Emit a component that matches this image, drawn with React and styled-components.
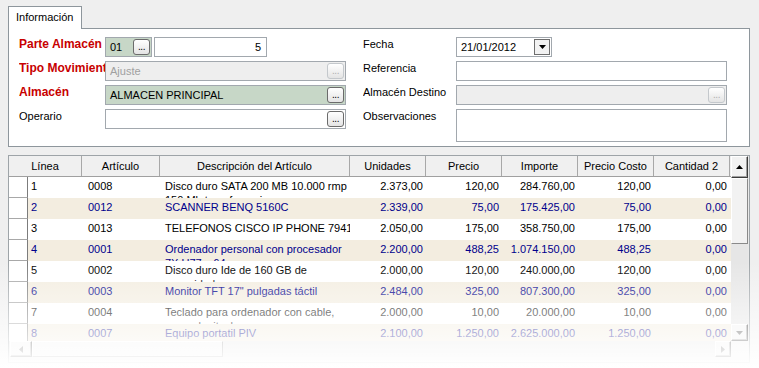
import React from "react";
import styled, { createGlobalStyle, css } from "styled-components";

const GlobalStyle = createGlobalStyle`
  html, body {
    margin: 0;
    padding: 0;
    background: #efefef;
    font-family: "Liberation Sans", Arial, sans-serif;
    font-size: 11px;
    color: #000;
  }
  body {
    height: 368px;
    overflow: hidden;
  }
`;

const Page = styled.div`
  position: relative;
  height: 368px;
  padding-top: 6px;
  box-sizing: border-box;
`;

const Tab = styled.div`
  position: relative;
  z-index: 1;
  margin-left: 8px;
  margin-bottom: -1px;
  width: 74px;
  height: 23px;
  box-sizing: border-box;
  border: 1px solid #8e969c;
  border-bottom: none;
  background: #fff;
  font-size: 11px;
  padding: 4px 0 0 7px;
`;

const Panel = styled.div`
  margin: 0 9px 0 8px;
  border: 1px solid #8e969c;
  background: #fff;
  padding: 8px 0 4px 10px;
  display: grid;
  grid-template-columns: 86px 241px 17px 93px 271px;
  grid-template-rows: 20px 20px 20px 33px;
  row-gap: 4px;
`;

const Label = styled.div`
  line-height: 15px;
  white-space: nowrap;
  overflow: hidden;
  grid-column: ${(p) => p.$col};
  ${(p) =>
    p.$required &&
    css`
      color: #c80000;
      font-weight: bold;
      font-size: 12px;
    `}
`;

const bgs = {
  green: "#c7d7c7",
  off: "#eeeeee",
  white: "#fff",
};

const Field = styled.div`
  grid-column: ${(p) => p.$col};
  display: flex;
  align-items: center;
  box-sizing: border-box;
  height: ${(p) => (p.$tall ? "33px" : "20px")};
  width: ${(p) => (p.$w ? `${p.$w}px` : "auto")};
  border: 1px solid #a2a8ae;
  background: ${(p) => bgs[p.$bg || "white"]};
  color: ${(p) => (p.$bg === "off" ? "#a0a0a0" : "#000")};
  padding: 0 1px 0 4px;
  justify-content: ${(p) => (p.$right ? "flex-end" : "space-between")};
`;

const Pair = styled.div`
  grid-column: ${(p) => p.$col};
  display: flex;
  gap: 2px;
`;

const Value = styled.span`
  padding-right: ${(p) => (p.$right ? "4px" : "0")};
`;

const DotsButton = styled.div`
  width: 17px;
  height: 16px;
  box-sizing: border-box;
  border: 1px solid ${(p) => (p.$off ? "#c4c8cc" : "#6b6b6b")};
  border-radius: 3px;
  background: linear-gradient(#ffffff, #e4e4e4);
  color: ${(p) => (p.$off ? "#b0b0b0" : "#000")};
  font-size: 10px;
  line-height: 14px;
  text-align: center;
  letter-spacing: -0.5px;
`;

const DropButton = styled.div`
  width: 16px;
  height: 16px;
  box-sizing: border-box;
  border: 1px solid #6e6e6e;
  background: #f2f2f2;
  display: flex;
  align-items: center;
  justify-content: center;
`;

const Arrow = ({ dir = "down", color = "#000" }) => {
  const pts = {
    down: "0,0 7,0 3.5,4",
    up: "0,4 7,4 3.5,0",
    left: "4,0 4,7 0,3.5",
    right: "0,0 0,7 4,3.5",
  }[dir];
  const vert = dir === "up" || dir === "down";
  return (
    <svg width={vert ? 7 : 4} height={vert ? 4 : 7}>
      <polygon points={pts} fill={color} />
    </svg>
  );
};

const Grid = styled.div`
  margin: 8px 9px 0 8px;
  border: 1px solid #9ea4a8;
  background: #e9e9e9;
  height: 208px;
  box-sizing: border-box;
  display: flex;
  flex-direction: column;
`;

const Top = styled.div`
  display: flex;
  height: 185px;
`;

const Main = styled.div`
  width: 722px;
  display: flex;
  flex-direction: column;
  overflow: hidden;
`;

const HeaderRow = styled.div`
  display: flex;
  height: 20px;
  flex: none;
  background: #f0f0f0;
  border-bottom: 1px solid #a0a0a0;
`;

const HeadCell = styled.div`
  width: ${(p) => p.$w}px;
  flex: none;
  box-sizing: border-box;
  border-right: 1px solid #a8a8a8;
  text-align: center;
  line-height: 20px;
  white-space: nowrap;
`;

const Body = styled.div`
  flex: 1;
  overflow: hidden;
  background: #fff;
`;

const Row = styled.div`
  display: flex;
  height: 21px;
  color: ${(p) => (p.$alt ? "#00008c" : "#000")};
`;

const Indicator = styled.div`
  width: 19px;
  flex: none;
  box-sizing: border-box;
  background: #fff;
  border-right: 1px solid #7c7c7c;
  border-bottom: 1px solid #a8a8a8;
`;

const Cells = styled.div`
  display: flex;
  flex: 1;
  background: ${(p) => (p.$alt ? "#f3ede0" : "#fff")};
`;

const Cell = styled.div`
  width: ${(p) => p.$w}px;
  flex: none;
  box-sizing: border-box;
  overflow: hidden;
  white-space: pre;
  line-height: 14px;
  padding-top: 2px;
  text-align: ${(p) => (p.$num ? "right" : "left")};
  padding-left: ${(p) => p.$pl || 0}px;
  padding-right: ${(p) => (p.$num ? 3 : 0)}px;
`;

const VScroll = styled.div`
  width: 17px;
  display: flex;
  flex-direction: column;
  background: #e6e6e6;
`;

const bevel = css`
  box-sizing: border-box;
  border: 1px solid;
  border-color: #ffffff #3c3c3c #3c3c3c #ffffff;
  box-shadow: inset -1px -1px 0 #a0a0a0;
  background: #f2f2f2;
  display: flex;
  align-items: center;
  justify-content: center;
`;

const ScrollBtn = styled.div`
  ${bevel}
  width: ${(p) => p.$w || 17}px;
  height: ${(p) => p.$h || 17}px;
  flex: none;
`;

const Thumb = styled.div`
  ${bevel}
  flex: none;
  width: ${(p) => p.$w || 17}px;
  height: ${(p) => p.$h || 17}px;
  border-color: #ffffff #8a8a8a #8a8a8a #ffffff;
  box-shadow: none;
`;

const Spacer = styled.div`
  flex: 1;
`;

const HScroll = styled.div`
  display: flex;
  height: 16px;
  padding-left: 1px;
  background: #e6e6e6;
`;

const Corner = styled.div`
  width: 18px;
  background: #efefef;
`;

const Fade = styled.div`
  position: absolute;
  left: 0;
  right: 0;
  top: 262px;
  bottom: 0;
  pointer-events: none;
  background: linear-gradient(
    rgba(255, 255, 255, 0) 0px,
    rgba(255, 255, 255, 0.9) 95px,
    #ffffff 106px
  );
`;

const columns = [
  { key: "linea", w: 54, pl: 3 },
  { key: "art", w: 78, pl: 6 },
  { key: "desc", w: 190, pl: 5 },
  { key: "uds", w: 76, num: true },
  { key: "precio", w: 76, num: true },
  { key: "importe", w: 76, num: true },
  { key: "costo", w: 76, num: true },
  { key: "cant", w: 76, num: true },
];

const headers = [
  ["Línea", 73],
  ["Artículo", 78],
  ["Descripción del Artículo", 190],
  ["Unidades", 76],
  ["Precio", 76],
  ["Importe", 76],
  ["Precio Costo", 76],
  ["Cantidad 2", 76],
];

const rows = [
  ["1", "0008", "Disco duro SATA 200 MB 10.000 rmp\n150 Mb transferencia", "2.373,00", "120,00", "284.760,00", "120,00", "0,00"],
  ["2", "0012", "SCANNER BENQ 5160C", "2.339,00", "75,00", "175.425,00", "75,00", "0,00"],
  ["3", "0013", "TELEFONOS CISCO IP PHONE 7941", "2.050,00", "175,00", "358.750,00", "175,00", "0,00"],
  ["4", "0001", "Ordenador personal con procesador\n7X U77 x 64", "2.200,00", "488,25", "1.074.150,00", "488,25", "0,00"],
  ["5", "0002", "Disco duro Ide de 160 GB de\ncapacidad", "2.000,00", "120,00", "240.000,00", "120,00", "0,00"],
  ["6", "0003", "Monitor TFT 17\" pulgadas táctil", "2.484,00", "325,00", "807.300,00", "325,00", "0,00"],
  ["7", "0004", "Teclado para ordenador con cable,\nmarca logitech", "2.000,00", "10,00", "20.000,00", "10,00", "0,00"],
  ["8", "0007", "Equipo portatil PIV", "2.100,00", "1.250,00", "2.625.000,00", "1.250,00", "0,00"],
];

export default function App() {
  return (
    <Page>
      <GlobalStyle />
      <Tab>Información</Tab>
      <Panel>
        <Label $col={1} $required>Parte Almacén</Label>
        <Pair $col={2}>
          <Field $bg="green" $w={47}>
            <span>01</span>
            <DotsButton>...</DotsButton>
          </Field>
          <Field $w={113} $right>
            <Value $right>5</Value>
          </Field>
        </Pair>
        <Label $col={4}>Fecha</Label>
        <Field $col={5} $w={96}>
          <span>21/01/2012</span>
          <DropButton>
            <Arrow />
          </DropButton>
        </Field>

        <Label $col={1} $required>Tipo Movimiento</Label>
        <Field $col={2} $bg="off">
          <span>Ajuste</span>
          <DotsButton $off>...</DotsButton>
        </Field>
        <Label $col={4}>Referencia</Label>
        <Field $col={5} />

        <Label $col={1} $required>Almacén</Label>
        <Field $col={2} $bg="green">
          <span>ALMACEN PRINCIPAL</span>
          <DotsButton>...</DotsButton>
        </Field>
        <Label $col={4}>Almacén Destino</Label>
        <Field $col={5} $bg="off">
          <span />
          <DotsButton $off>...</DotsButton>
        </Field>

        <Label $col={1}>Operario</Label>
        <Field $col={2}>
          <span />
          <DotsButton>...</DotsButton>
        </Field>
        <Label $col={4}>Observaciones</Label>
        <Field $col={5} $tall />
      </Panel>

      <Grid>
        <Top>
          <Main>
            <HeaderRow>
              {headers.map(([t, w]) => (
                <HeadCell key={t} $w={w}>
                  {t}
                </HeadCell>
              ))}
            </HeaderRow>
            <Body>
              {rows.map((r, i) => (
                <Row key={r[0]} $alt={i % 2 === 1}>
                  <Indicator />
                  <Cells $alt={i % 2 === 1}>
                    {columns.map((c, j) => (
                      <Cell key={c.key} $w={c.w} $pl={c.pl} $num={c.num}>
                        {r[j]}
                      </Cell>
                    ))}
                  </Cells>
                </Row>
              ))}
            </Body>
          </Main>
          <VScroll>
            <ScrollBtn $h={22}>
              <Arrow dir="up" />
            </ScrollBtn>
            <Thumb $h={66} />
            <Spacer />
            <ScrollBtn $h={17}>
              <Arrow dir="down" color="#555" />
            </ScrollBtn>
          </VScroll>
        </Top>
        <HScroll>
          <ScrollBtn $w={22} $h={16}>
            <Arrow dir="left" color="#555" />
          </ScrollBtn>
          <Thumb $w={191} $h={16} />
          <Spacer />
          <ScrollBtn $w={16} $h={16}>
            <Arrow dir="right" color="#555" />
          </ScrollBtn>
          <Corner />
        </HScroll>
      </Grid>
      <Fade />
    </Page>
  );
}
